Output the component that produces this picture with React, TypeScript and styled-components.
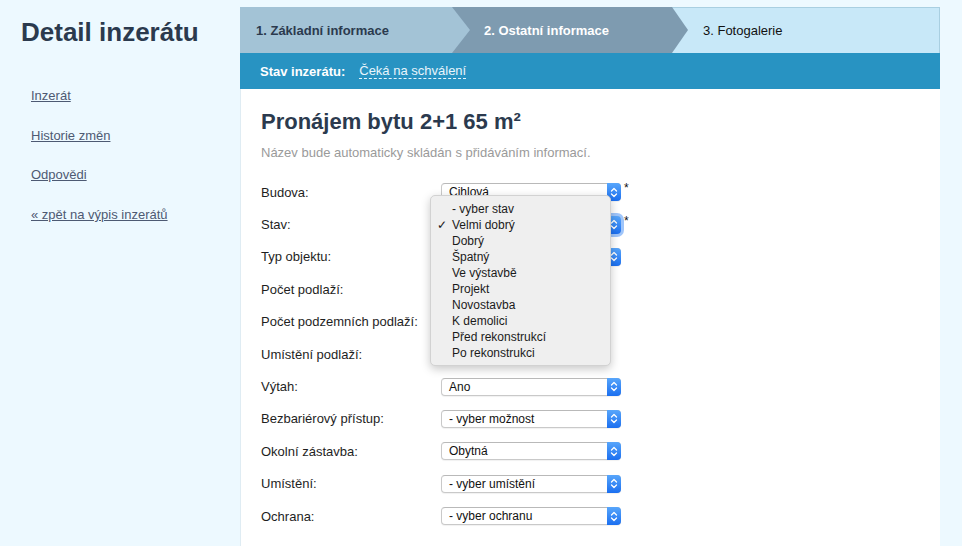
import React from "react";
import styled, { createGlobalStyle, css } from "styled-components";

const Global = createGlobalStyle`
  html, body { margin: 0; padding: 0; }
  body {
    background: #edf9ff;
    font-family: "Liberation Sans", Arial, Helvetica, sans-serif;
    color: #222;
  }
`;

const Page = styled.div`
  display: grid;
  grid-template-columns: 240px 700px 1fr;
  min-height: 546px;
`;

const Sidebar = styled.aside`
  padding: 17px 0 0 21px;
`;

const Title = styled.h1`
  margin: 0 0 41px;
  font-size: 26px;
  line-height: 30px;
  font-weight: bold;
  color: #2b3a4e;
`;

const NavList = styled.nav`
  display: flex;
  flex-direction: column;
  gap: 23.7px;
  padding-left: 10px;
`;

const NavLink = styled.a`
  font-size: 13px;
  line-height: 16px;
  color: #4d5a73;
  text-decoration: underline;
  cursor: pointer;
`;

const Main = styled.main`
  padding-top: 7px;
  display: flex;
  flex-direction: column;
`;

const Panel = styled.section`
  flex: 1;
  background: #fff;
  border-left: 1px solid #dfecf3;
`;

const Steps = styled.div`
  display: flex;
  height: 46px;
  background: #c8e8f8;
  box-shadow: inset 0 1px 0 #a9cfe1, inset -1px 0 0 #a9cfe1;
  margin-left: -1px;
`;

type StepKind = "done" | "active" | "next";

const Step = styled.div<{ $kind: StepKind }>`
  display: flex;
  align-items: center;
  height: 100%;
  font-size: 13px;
  position: relative;
  box-sizing: border-box;
  ${(p) =>
    p.$kind === "done" &&
    css`
      width: 230px;
      padding-left: 16px;
      background: #a3c3d6;
      color: #2b3a4e;
      font-weight: bold;
      z-index: 3;
      clip-path: polygon(0 0, calc(100% - 18px) 0, 100% 50%, calc(100% - 18px) 100%, 0 100%);
    `}
  ${(p) =>
    p.$kind === "active" &&
    css`
      width: 236px;
      margin-left: -18px;
      padding-left: 32px;
      background: #7e9bb0;
      color: #fff;
      font-weight: bold;
      z-index: 2;
      clip-path: polygon(0 0, calc(100% - 16px) 0, 100% 50%, calc(100% - 16px) 100%, 0 100%);
    `}
  ${(p) =>
    p.$kind === "next" &&
    css`
      flex: 1;
      margin-left: -18px;
      padding-left: 33px;
      color: #111;
      z-index: 1;
    `}
`;

const StatusBar = styled.div`
  display: flex;
  align-items: center;
  gap: 14px;
  height: 36px;
  padding-left: 20px;
  margin-left: -1px;
  background: #2893c2;
  font-size: 13px;
  color: #fff;
`;

const StatusLabel = styled.span`
  font-weight: bold;
`;

const StatusValue = styled.span`
  color: #e8f5fc;
  border-bottom: 1px dashed #e8f5fc;
  line-height: 15px;
`;

const Content = styled.div`
  padding: 19px 20px 20px 20px;
`;

const Heading = styled.h2`
  margin: 0;
  font-size: 22px;
  line-height: 28px;
  font-weight: bold;
  color: #2b3a4e;
`;

const Hint = styled.p`
  margin: 9px 0 15px;
  font-size: 13px;
  line-height: 16px;
  color: #9a9a9a;
`;

const Form = styled.div`
  position: relative;
  display: grid;
  grid-template-columns: 180px auto;
  grid-auto-rows: 32.4px;
  align-items: center;
`;

const Label = styled.label`
  font-size: 13px;
  color: #1e1e1e;
`;

const Field = styled.div`
  display: flex;
  align-items: flex-start;
  gap: 3px;
`;

const SelectBox = styled.div<{ $focused?: boolean }>`
  position: relative;
  box-sizing: border-box;
  width: 180px;
  height: 18px;
  display: flex;
  align-items: center;
  padding-left: 7px;
  background: #fff;
  border: 1px solid #c9c9c9;
  border-top-color: #b9b9b9;
  border-radius: 4px;
  font-size: 12px;
  color: #111;
  box-shadow: 0 1px 1px rgba(0, 0, 0, 0.06);
  ${(p) =>
    p.$focused &&
    css`
      box-shadow: 0 0 0 3px rgba(80, 150, 245, 0.55);
    `}
`;

const SelectButton = styled.span`
  position: absolute;
  right: -1px;
  top: -1px;
  bottom: -1px;
  width: 14px;
  border-radius: 0 4px 4px 0;
  background: linear-gradient(#58a6fb, #1b6ff0);
  display: flex;
  align-items: center;
  justify-content: center;
`;

const TextInput = styled.div`
  box-sizing: border-box;
  width: 160px;
  height: 18px;
  border: 1px solid #c9c9c9;
  background: #fff;
`;

const Required = styled.span`
  font-size: 12px;
  line-height: 10px;
  color: #111;
`;

const Menu = styled.ul`
  position: absolute;
  left: 169px;
  top: 19px;
  width: 181px;
  margin: 0;
  padding: 5px 0 4px;
  box-sizing: border-box;
  list-style: none;
  background: #efefef;
  border: 1px solid #d2d2d2;
  border-radius: 5px;
  box-shadow: 0 3px 10px rgba(0, 0, 0, 0.22);
  z-index: 10;
`;

const MenuItem = styled.li<{ $checked?: boolean }>`
  position: relative;
  height: 16px;
  line-height: 16px;
  padding-left: 21px;
  font-size: 12px;
  color: #1b1b1b;
  &::before {
    content: ${(p) => (p.$checked ? '"\\2713"' : '""')};
    position: absolute;
    left: 6px;
    top: 0;
    font-size: 12px;
  }
`;

const Chevrons = () => (
  <svg width="8" height="11" viewBox="0 0 8 11" fill="none">
    <path d="M1.5 4 L4 1.5 L6.5 4" stroke="#fff" strokeWidth="1.3" strokeLinecap="round" strokeLinejoin="round" />
    <path d="M1.5 7 L4 9.5 L6.5 7" stroke="#fff" strokeWidth="1.3" strokeLinecap="round" strokeLinejoin="round" />
  </svg>
);

const Select = ({ value, focused }: { value: string; focused?: boolean }) => (
  <SelectBox $focused={focused}>
    {value}
    <SelectButton>
      <Chevrons />
    </SelectButton>
  </SelectBox>
);

type Row = { label: string; value?: string; required?: boolean; input?: boolean; focused?: boolean };

const rows: Row[] = [
  { label: "Budova:", value: "Cihlová", required: true },
  { label: "Stav:", value: "Velmi dobrý", required: true, focused: true },
  { label: "Typ objektu:", value: "- vyber typ" },
  { label: "Počet podlaží:", input: true },
  { label: "Počet podzemních podlaží:", input: true },
  { label: "Umístění podlaží:", input: true },
  { label: "Výtah:", value: "Ano" },
  { label: "Bezbariérový přístup:", value: "- vyber možnost" },
  { label: "Okolní zástavba:", value: "Obytná" },
  { label: "Umístění:", value: "- vyber umístění" },
  { label: "Ochrana:", value: "- vyber ochranu" },
];

const stavOptions = [
  "- vyber stav",
  "Velmi dobrý",
  "Dobrý",
  "Špatný",
  "Ve výstavbě",
  "Projekt",
  "Novostavba",
  "K demolici",
  "Před rekonstrukcí",
  "Po rekonstrukci",
];

export default function App() {
  return (
    <>
      <Global />
      <Page>
        <Sidebar>
          <Title>Detail inzerátu</Title>
          <NavList>
            <NavLink>Inzerát</NavLink>
            <NavLink>Historie změn</NavLink>
            <NavLink>Odpovědi</NavLink>
            <NavLink>« zpět na výpis inzerátů</NavLink>
          </NavList>
        </Sidebar>
        <Main>
          <Panel>
            <Steps>
              <Step $kind="done">1. Základní informace</Step>
              <Step $kind="active">2. Ostatní informace</Step>
              <Step $kind="next">3. Fotogalerie</Step>
            </Steps>
            <StatusBar>
              <StatusLabel>Stav inzerátu:</StatusLabel>
              <StatusValue>Čeká na schválení</StatusValue>
            </StatusBar>
            <Content>
              <Heading>Pronájem bytu 2+1 65 m²</Heading>
              <Hint>Název bude automaticky skládán s přidáváním informací.</Hint>
              <Form>
                {rows.map((r) => (
                  <React.Fragment key={r.label}>
                    <Label>{r.label}</Label>
                    <Field>
                      {r.input ? <TextInput /> : <Select value={r.value ?? ""} focused={r.focused} />}
                      {r.required && <Required>*</Required>}
                    </Field>
                  </React.Fragment>
                ))}
                <Menu>
                  {stavOptions.map((o) => (
                    <MenuItem key={o} $checked={o === "Velmi dobrý"}>
                      {o}
                    </MenuItem>
                  ))}
                </Menu>
              </Form>
            </Content>
          </Panel>
        </Main>
      </Page>
    </>
  );
}
